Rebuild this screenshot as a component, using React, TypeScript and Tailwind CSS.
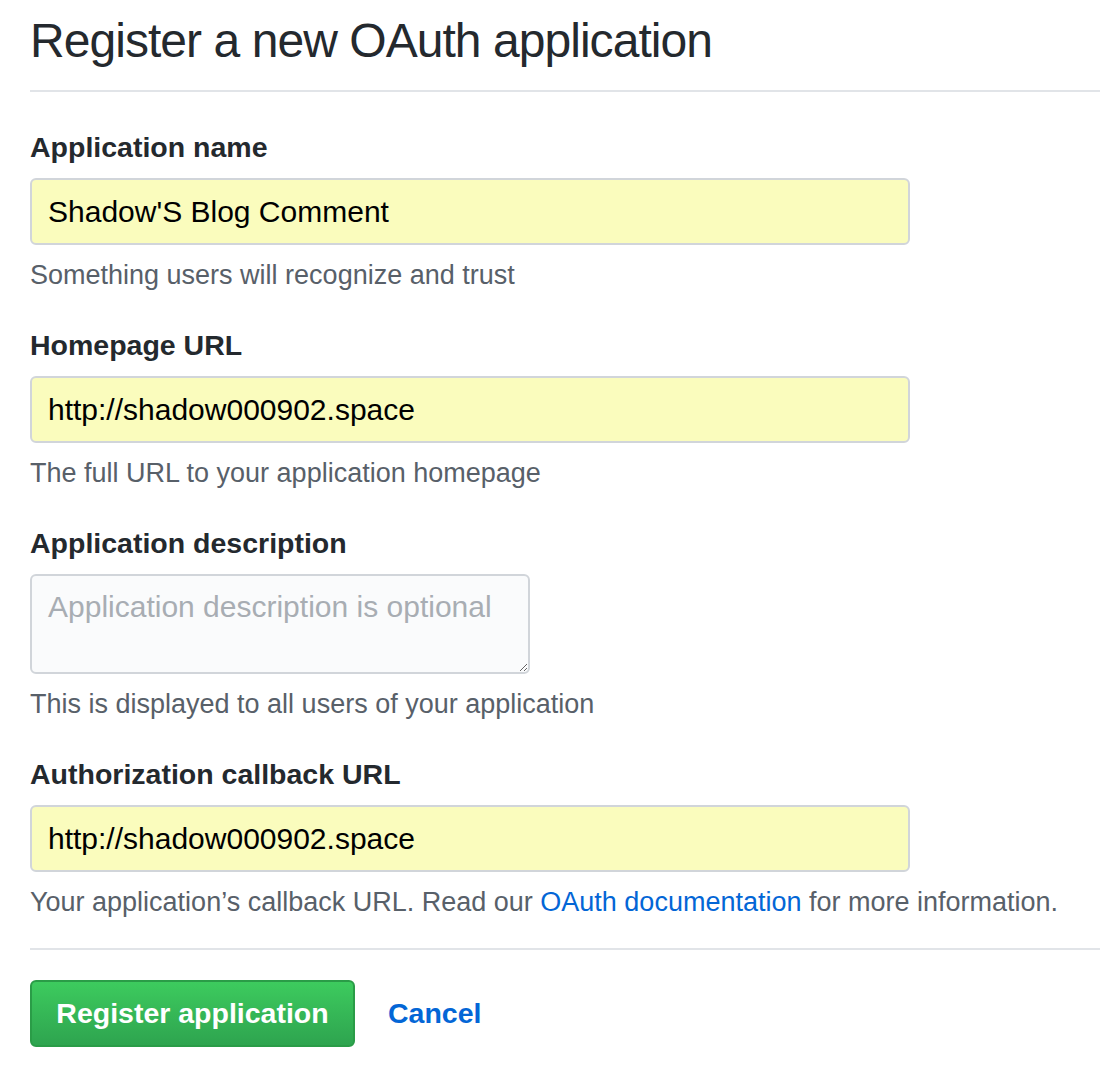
export default function App() {
  const font = { fontFamily: '"Liberation Sans", Arial, sans-serif' };
  return (
    <div className="min-h-[1076px] bg-white pl-[30px] text-[#24292e]" style={font}>
      <div className="border-b-2 border-[#e1e4e8] pt-[11px] pb-[19px]">
        <h2 className="text-[48px] leading-[60px] font-normal tracking-[-0.95px]">
          Register a new OAuth application
        </h2>
      </div>

      <form className="pt-[35px]">
        <dl className="mb-[32px]">
          <dt className="text-[28.5px] leading-[40px] font-bold">Application name</dt>
          <dd className="mt-[11px]">
            <input
              readOnly
              value="Shadow'S Blog Comment"
              className="box-border h-[67px] w-[880px] rounded-[6px] border-2 border-[#d1d5da] bg-[#fafcbd] px-4 text-[30px] text-black outline-none"
            />
          </dd>
          <p className="mt-[12px] text-[27px] leading-[36px] text-[#586069]">
            Something users will recognize and trust
          </p>
        </dl>

        <dl className="mb-[32px]">
          <dt className="text-[28.5px] leading-[40px] font-bold">Homepage URL</dt>
          <dd className="mt-[11px]">
            <input
              readOnly
              value="http://shadow000902.space"
              className="box-border h-[67px] w-[880px] rounded-[6px] border-2 border-[#d1d5da] bg-[#fafcbd] px-4 text-[30px] text-black outline-none"
            />
          </dd>
          <p className="mt-[12px] text-[27px] leading-[36px] text-[#586069]">
            The full URL to your application homepage
          </p>
        </dl>

        <dl className="mb-[32px]">
          <dt className="text-[28.5px] leading-[40px] font-bold">Application description</dt>
          <dd className="mt-[11px] flex">
            <textarea
              readOnly
              placeholder="Application description is optional"
              className="box-border block h-[100px] w-[500px] resize rounded-[6px] border-2 border-[#d1d5da] bg-[#fafbfc] px-4 pt-[11px] text-[30px] leading-[40px] text-black outline-none placeholder:text-[#a8adb3]"
            />
          </dd>
          <p className="mt-[12px] text-[27px] leading-[36px] text-[#586069]">
            This is displayed to all users of your application
          </p>
        </dl>

        <dl>
          <dt className="text-[28.5px] leading-[40px] font-bold">Authorization callback URL</dt>
          <dd className="mt-[11px]">
            <input
              readOnly
              value="http://shadow000902.space"
              className="box-border h-[67px] w-[880px] rounded-[6px] border-2 border-[#d1d5da] bg-[#fafcbd] px-4 text-[30px] text-black outline-none"
            />
          </dd>
          <p className="mt-[12px] text-[27px] leading-[36px] text-[#586069]">
            Your application’s callback URL. Read our{" "}
            <a className="text-[#0366d6]">OAuth documentation</a> for more information.
          </p>
        </dl>

        <div className="mt-[28px] border-t-2 border-[#e1e4e8] pt-[30px] flex items-center">
          <button
            type="button"
            className="box-border h-[67px] w-[325px] rounded-[6px] border-2 border-[#2a9c47] bg-gradient-to-b from-[#3dcb5e] to-[#2ea44f] text-[28.5px] font-bold text-white"
          >
            Register application
          </button>
          <a className="ml-[33px] text-[28.5px] font-bold text-[#0366d6]">Cancel</a>
        </div>
      </form>
    </div>
  );
}
